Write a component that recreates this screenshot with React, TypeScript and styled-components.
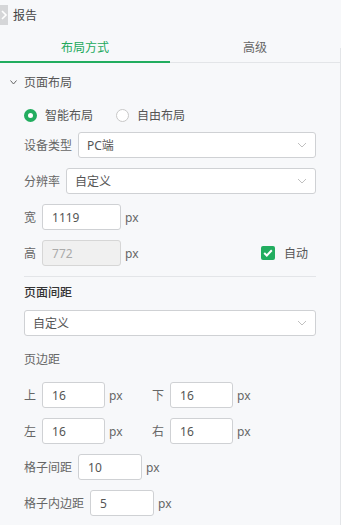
import React from "react";
import styled, { createGlobalStyle } from "styled-components";

const Global = createGlobalStyle`
  html, body { margin: 0; padding: 0; background: #f7f8fa; }
  body { font-family: "Noto Sans", "Noto Sans CJK SC", sans-serif; font-size: 12px; color: #666; }
  * { box-sizing: border-box; }
`;

const Panel = styled.div`
  position: relative;
  width: 341px;
  height: 525px;
  background: #f7f8fa;
  overflow: hidden;
  &::after {
    content: "";
    position: absolute;
    top: 48px;
    right: 0;
    bottom: 0;
    width: 1px;
    background: #e3e5e8;
  }
`;

const Header = styled.div`
  height: 32px;
  display: flex;
  align-items: center;
  gap: 5px;
  font-size: 12px;
  color: #444;
  padding-bottom: 2px;
`;

const Tabs = styled.div`
  display: flex;
  height: 31px;
  box-shadow: inset 0 -1px 0 #e3e5e8;
  margin-right: 1px;
`;

const Tab = styled.div<{ $active?: boolean }>`
  flex: 1;
  display: flex;
  align-items: center;
  justify-content: center;
  font-size: 12px;
  color: ${(p) => (p.$active ? "#22a95c" : "#666")};
  border-bottom: 2px solid ${(p) => (p.$active ? "#22ad5f" : "transparent")};
`;

const SectionHead = styled.div`
  display: flex;
  align-items: center;
  gap: 7px;
  height: 20px;
  margin-top: 9px;
  padding-left: 10px;
  color: #555;
`;

const Body = styled.div`
  padding: 0 25px 0 24px;
  display: flex;
  flex-direction: column;
`;

const RadioRow = styled.div`
  display: flex;
  align-items: center;
  height: 20px;
  margin-top: 13px;
  gap: 23px;
`;

const RadioItem = styled.div`
  display: flex;
  align-items: center;
  gap: 8px;
  color: #555;
`;

const RadioDot = styled.span<{ $on?: boolean }>`
  width: 13px;
  height: 13px;
  border-radius: 50%;
  background: #fff;
  border: ${(p) => (p.$on ? "4px solid #22ad5f" : "1px solid #c8c8c8")};
`;

const Row = styled.div<{ $mt?: number }>`
  display: flex;
  align-items: center;
  gap: 6px;
  height: 26px;
  margin-top: ${(p) => p.$mt ?? 10}px;
  color: #666;
`;

const Label = styled.span`
  white-space: nowrap;
`;

const Select = styled.div`
  flex: 1;
  height: 26px;
  background: #fff;
  border: 1px solid #cfd1d4;
  border-radius: 3px;
  display: flex;
  align-items: center;
  justify-content: space-between;
  padding: 0 8px 0 8px;
  color: #555;
`;

const Input = styled.div<{ $w: number; $disabled?: boolean }>`
  width: ${(p) => p.$w}px;
  height: 26px;
  background: ${(p) => (p.$disabled ? "#f0f0f0" : "#fff")};
  border: 1px solid ${(p) => (p.$disabled ? "#d6d6d6" : "#cfd1d4")};
  border-radius: 3px;
  display: flex;
  align-items: center;
  padding-left: 9px;
  color: ${(p) => (p.$disabled ? "#aaa" : "#555")};
`;

const Unit = styled.span`
  color: #666;
  margin-left: -2px;
`;

const Spacer = styled.span`
  flex: 1;
`;

const Check = styled.span`
  width: 14px;
  height: 14px;
  border-radius: 2px;
  background: #22ad5f;
  display: flex;
  align-items: center;
  justify-content: center;
`;

const CheckWrap = styled.div`
  display: flex;
  align-items: center;
  gap: 9px;
  margin-right: 8px;
  color: #555;
`;

const Divider = styled.div`
  height: 1px;
  background: #e3e5e8;
  margin-top: 10px;
`;

const SubTitle = styled.div<{ $strong?: boolean; $mt: number }>`
  height: 20px;
  display: flex;
  align-items: center;
  margin-top: ${(p) => p.$mt}px;
  color: ${(p) => (p.$strong ? "#333" : "#666")};
  font-weight: ${(p) => (p.$strong ? 500 : 400)};
`;

const Pair = styled.div`
  display: flex;
  align-items: center;
  gap: 6px;
  width: 122px;
`;

const Caret = () => (
  <svg width="10" height="6" viewBox="0 0 10 6">
    <path d="M1 1 L5 5 L9 1" fill="none" stroke="#c0c0c0" strokeWidth="1" />
  </svg>
);

const SelectBox = ({ text }: { text: string }) => (
  <Select>
    <span>{text}</span>
    <Caret />
  </Select>
);

export default function App() {
  return (
    <>
      <Global />
      <Panel>
        <Header>
          <svg width="8" height="20" viewBox="0 0 8 20">
            <rect x="0" y="0" width="8" height="20" fill="#d5d6d8" />
            <path d="M2 6 L6 10 L2 14" fill="none" stroke="#fff" strokeWidth="1.6" />
          </svg>
          <span>报告</span>
        </Header>
        <Tabs>
          <Tab $active>布局方式</Tab>
          <Tab>高级</Tab>
        </Tabs>
        <SectionHead>
          <svg width="7" height="5" viewBox="0 0 7 5">
            <path d="M0.5 0.5 L3.5 4 L6.5 0.5" fill="none" stroke="#666" strokeWidth="1" />
          </svg>
          <span>页面布局</span>
        </SectionHead>
        <Body>
          <RadioRow>
            <RadioItem>
              <RadioDot $on />
              <span>智能布局</span>
            </RadioItem>
            <RadioItem>
              <RadioDot />
              <span>自由布局</span>
            </RadioItem>
          </RadioRow>
          <Row $mt={7}>
            <Label>设备类型</Label>
            <SelectBox text="PC端" />
          </Row>
          <Row>
            <Label>分辨率</Label>
            <SelectBox text="自定义" />
          </Row>
          <Row>
            <Label>宽</Label>
            <Input $w={79}>1119</Input>
            <Unit>px</Unit>
          </Row>
          <Row>
            <Label>高</Label>
            <Input $w={79} $disabled>772</Input>
            <Unit>px</Unit>
            <Spacer />
            <CheckWrap>
              <Check>
                <svg width="10" height="8" viewBox="0 0 10 8">
                  <path d="M1.2 4 L3.8 6.5 L8.8 1.3" fill="none" stroke="#fff" strokeWidth="2" />
                </svg>
              </Check>
              <span>自动</span>
            </CheckWrap>
          </Row>
          <Divider />
          <SubTitle $strong $mt={5}>页面间距</SubTitle>
          <Row $mt={8}>
            <SelectBox text="自定义" />
          </Row>
          <SubTitle $mt={13}>页边距</SubTitle>
          <Row $mt={13}>
            <Pair>
              <Label>上</Label>
              <Input $w={63}>16</Input>
              <Unit>px</Unit>
            </Pair>
            <Pair>
              <Label>下</Label>
              <Input $w={63}>16</Input>
              <Unit>px</Unit>
            </Pair>
          </Row>
          <Row>
            <Pair>
              <Label>左</Label>
              <Input $w={63}>16</Input>
              <Unit>px</Unit>
            </Pair>
            <Pair>
              <Label>右</Label>
              <Input $w={63}>16</Input>
              <Unit>px</Unit>
            </Pair>
          </Row>
          <Row>
            <Label>格子间距</Label>
            <Input $w={64}>10</Input>
            <Unit>px</Unit>
          </Row>
          <Row>
            <Label>格子内边距</Label>
            <Input $w={64}>5</Input>
            <Unit>px</Unit>
          </Row>
        </Body>
      </Panel>
    </>
  );
}
